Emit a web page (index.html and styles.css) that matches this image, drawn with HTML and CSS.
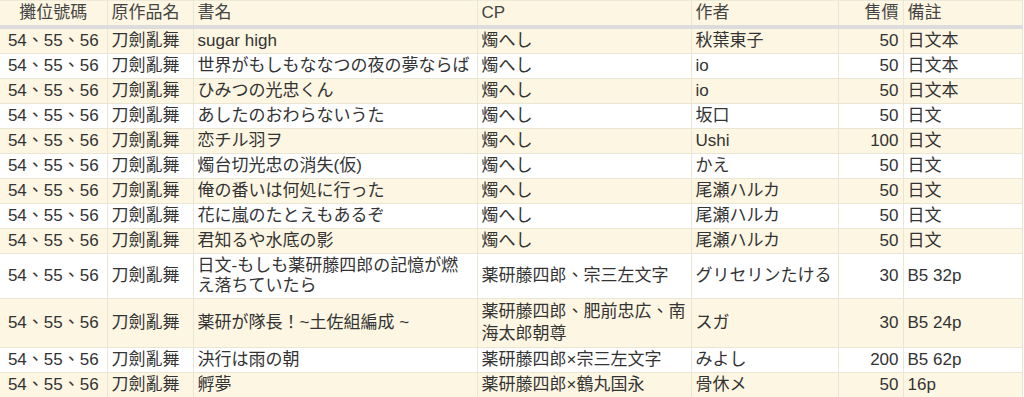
FILE: index.html
```html
<!DOCTYPE html>
<html lang="zh-Hant">
<head>
<meta charset="utf-8">
<title>販售清單</title>
<link rel="stylesheet" href="styles.css">
</head>
<body>
<table class="list">
  <colgroup>
    <col class="c-booth">
    <col class="c-origin">
    <col class="c-title">
    <col class="c-cp">
    <col class="c-author">
    <col class="c-price">
    <col class="c-note">
  </colgroup>
  <thead>
    <tr>
      <th class="center">攤位號碼</th>
      <th>原作品名</th>
      <th>書名</th>
      <th>CP</th>
      <th>作者</th>
      <th class="num">售價</th>
      <th>備註</th>
    </tr>
  </thead>
  <tbody>
    <tr class="odd"><td class="center">54、55、56</td><td>刀劍亂舞</td><td>sugar high</td><td>燭へし</td><td>秋葉東子</td><td class="num">50</td><td>日文本</td></tr>
    <tr><td class="center">54、55、56</td><td>刀劍亂舞</td><td>世界がもしもななつの夜の夢ならば</td><td>燭へし</td><td>io</td><td class="num">50</td><td>日文本</td></tr>
    <tr class="odd"><td class="center">54、55、56</td><td>刀劍亂舞</td><td>ひみつの光忠くん</td><td>燭へし</td><td>io</td><td class="num">50</td><td>日文本</td></tr>
    <tr><td class="center">54、55、56</td><td>刀劍亂舞</td><td>あしたのおわらないうた</td><td>燭へし</td><td>坂口</td><td class="num">50</td><td>日文</td></tr>
    <tr class="odd"><td class="center">54、55、56</td><td>刀劍亂舞</td><td>恋チル羽ヲ</td><td>燭へし</td><td>Ushi</td><td class="num">100</td><td>日文</td></tr>
    <tr><td class="center">54、55、56</td><td>刀劍亂舞</td><td>燭台切光忠の消失(仮)</td><td>燭へし</td><td>かえ</td><td class="num">50</td><td>日文</td></tr>
    <tr class="odd"><td class="center">54、55、56</td><td>刀劍亂舞</td><td>俺の番いは何処に行った</td><td>燭へし</td><td>尾瀬ハルカ</td><td class="num">50</td><td>日文</td></tr>
    <tr><td class="center">54、55、56</td><td>刀劍亂舞</td><td>花に嵐のたとえもあるぞ</td><td>燭へし</td><td>尾瀬ハルカ</td><td class="num">50</td><td>日文</td></tr>
    <tr class="odd"><td class="center">54、55、56</td><td>刀劍亂舞</td><td>君知るや水底の影</td><td>燭へし</td><td>尾瀬ハルカ</td><td class="num">50</td><td>日文</td></tr>
    <tr><td class="center">54、55、56</td><td>刀劍亂舞</td><td class="top">日文-もしも薬研藤四郎の記憶が燃え落ちていたら</td><td>薬研藤四郎、宗三左文字</td><td>グリセリンたける</td><td class="num">30</td><td>B5 32p</td></tr>
    <tr class="odd tall"><td class="center">54、55、56</td><td>刀劍亂舞</td><td>薬研が隊長！~土佐組編成 ~</td><td class="top">薬研藤四郎、肥前忠広、南海太郎朝尊</td><td>スガ</td><td class="num">30</td><td>B5 24p</td></tr>
    <tr><td class="center">54、55、56</td><td>刀劍亂舞</td><td>決行は雨の朝</td><td>薬研藤四郎×宗三左文字</td><td>みよし</td><td class="num">200</td><td>B5 62p</td></tr>
    <tr class="odd"><td class="center">54、55、56</td><td>刀劍亂舞</td><td>孵夢</td><td>薬研藤四郎×鶴丸国永</td><td>骨休メ</td><td class="num">50</td><td>16p</td></tr>
  </tbody>
</table>
</body>
</html>
```

FILE: styles.css
```css
html, body {
  margin: 0;
  padding: 0;
  background: #ffffff;
}

.list {
  table-layout: fixed;
  width: 1022px;
  border-collapse: collapse;
  font-family: "Liberation Sans", "Noto Sans CJK TC", sans-serif;
  font-size: 17px;
  line-height: 20px;
  color: #333333;
}

.c-booth { width: 107px; }
.c-origin { width: 86px; }
.c-title { width: 284px; }
.c-cp { width: 214px; }
.c-author { width: 147px; }
.c-price { width: 65px; }
.c-note { width: 119px; }

.list th,
.list td {
  padding: 2px 4px;
  border: 1px solid #ebe5d3;
  text-align: left;
  vertical-align: middle;
  white-space: normal;
  word-break: break-all;
}

.list th:first-child,
.list td:first-child {
  border-left: none;
}

.list th {
  font-weight: normal;
  color: #444444;
  background: #fdf6e2;
  height: 20px;
  border-top: 1px solid #efe9d8;
  border-bottom: 4px solid #dcdcdc;
}

.list td {
  height: 20px;
}

.list tr.odd td {
  background: #fdf6e2;
}

.list .center {
  text-align: center;
}

.list .num {
  text-align: right;
}

.list td.top {
  vertical-align: top;
}

.list tr.tall td {
  line-height: 22px;
}
```
